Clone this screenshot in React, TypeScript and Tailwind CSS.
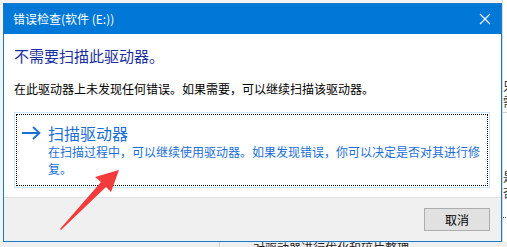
import React from 'react';

const cjk = { fontFamily: '"Noto Sans CJK SC", "Noto Sans", sans-serif' };

function CloseIcon(): JSX.Element {
  return (
    <svg width="12" height="12" viewBox="0 0 12 12" className="block">
      <path d="M1 1 L11 11 M11 1 L1 11" stroke="#ffffff" strokeWidth="1.1" fill="none" />
    </svg>
  );
}

function ArrowIcon(): JSX.Element {
  return (
    <svg width="19" height="14" viewBox="0 0 19 14" className="block">
      <path d="M0 7 H17 M11 1 L17.5 7 L11 13" stroke="#1a6fd6" strokeWidth="1.8" fill="none" />
    </svg>
  );
}

// red markup arrow drawn on top of the screenshot
function RedArrow(): JSX.Element {
  return (
    <svg width="507" height="247" className="absolute left-0 top-0 pointer-events-none">
      <path d="M60 229 L101 182 L95 177 L119 170 L111 192 L106 187 L61 230 Z" fill="#f23b3b" />
    </svg>
  );
}

export default function App(): JSX.Element {
  return (
    <div className="relative w-[507px] h-[247px] overflow-hidden bg-[#f3f3f3]" style={cjk}>
      {/* window behind the dialog */}
      <div className="absolute left-[502px] top-[0px] w-[10px] h-[247px] bg-[#ffffff] border-l border-[#d9d9d9]">
        <div className="mt-[78px] text-[12px] leading-[16px] text-[#333]">只需</div>
        <div className="mt-[2px] h-px bg-[#cfcfcf]" />
        <div className="mt-[56px] text-[12px] leading-[16px] text-[#333]">是否</div>
        <div className="mt-[16px] border-t border-dotted border-[#555]" />
      </div>
      <div className="absolute left-0 top-[242px] w-[507px] h-[10px] bg-[#efefef] flex">
        <div className="w-[220px] border-r border-[#cfcfcf]" />
        <div className="pl-[33px] text-[12px] leading-[14px] text-[#222] -mt-[1px]">对驱动器进行优化和碎片整理</div>
      </div>

      {/* dialog */}
      <div className="absolute left-[3px] top-[3px] w-[499px] h-[239px] border border-[#1979ca] bg-white flex flex-col">
        <div className="h-[30px] bg-[#0078d7] flex items-center justify-between pl-[9px] pr-[10px] shrink-0">
          <span className="text-[12px] leading-[16px] text-white">错误检查(软件 (E:))</span>
          <CloseIcon />
        </div>

        <div className="flex-1 flex flex-col px-[10px] pt-[12px]">
          <div className="text-[15px] leading-[20px] text-[#1a2fa0]">不需要扫描此驱动器。</div>
          <div className="mt-[14px] text-[12px] leading-[17px] text-black">在此驱动器上未发现任何错误。如果需要，可以继续扫描该驱动器。</div>

          <div className="mt-[15px] w-[476px] border border-[#cce4f7] p-px">
            <div className="border border-dotted border-black h-[72px] flex pl-[5px] pt-[8px]">
              <div className="pt-[3px] pr-[7px]">
                <ArrowIcon />
              </div>
              <div className="flex flex-col">
                <div className="text-[16px] leading-[20px] text-[#1a6fd6]">扫描驱动器</div>
                <div className="w-[436px] text-[12px] leading-[17px] text-[#1a6fd6]">
                  在扫描过程中，可以继续使用驱动器。如果发现错误，你可以决定是否对其进行修复。
                </div>
              </div>
            </div>
          </div>
        </div>

        <div className="h-[44px] shrink-0 bg-[#f0f0f0] border-t border-[#dfdfdf] flex justify-end pt-[10px] pr-[11px]">
          <button className="w-[66px] h-[23px] bg-[#e1e1e1] border border-[#adadad] text-[12px] leading-[16px] text-black" style={cjk}>
            取消
          </button>
        </div>
      </div>

      <RedArrow />
    </div>
  );
}
